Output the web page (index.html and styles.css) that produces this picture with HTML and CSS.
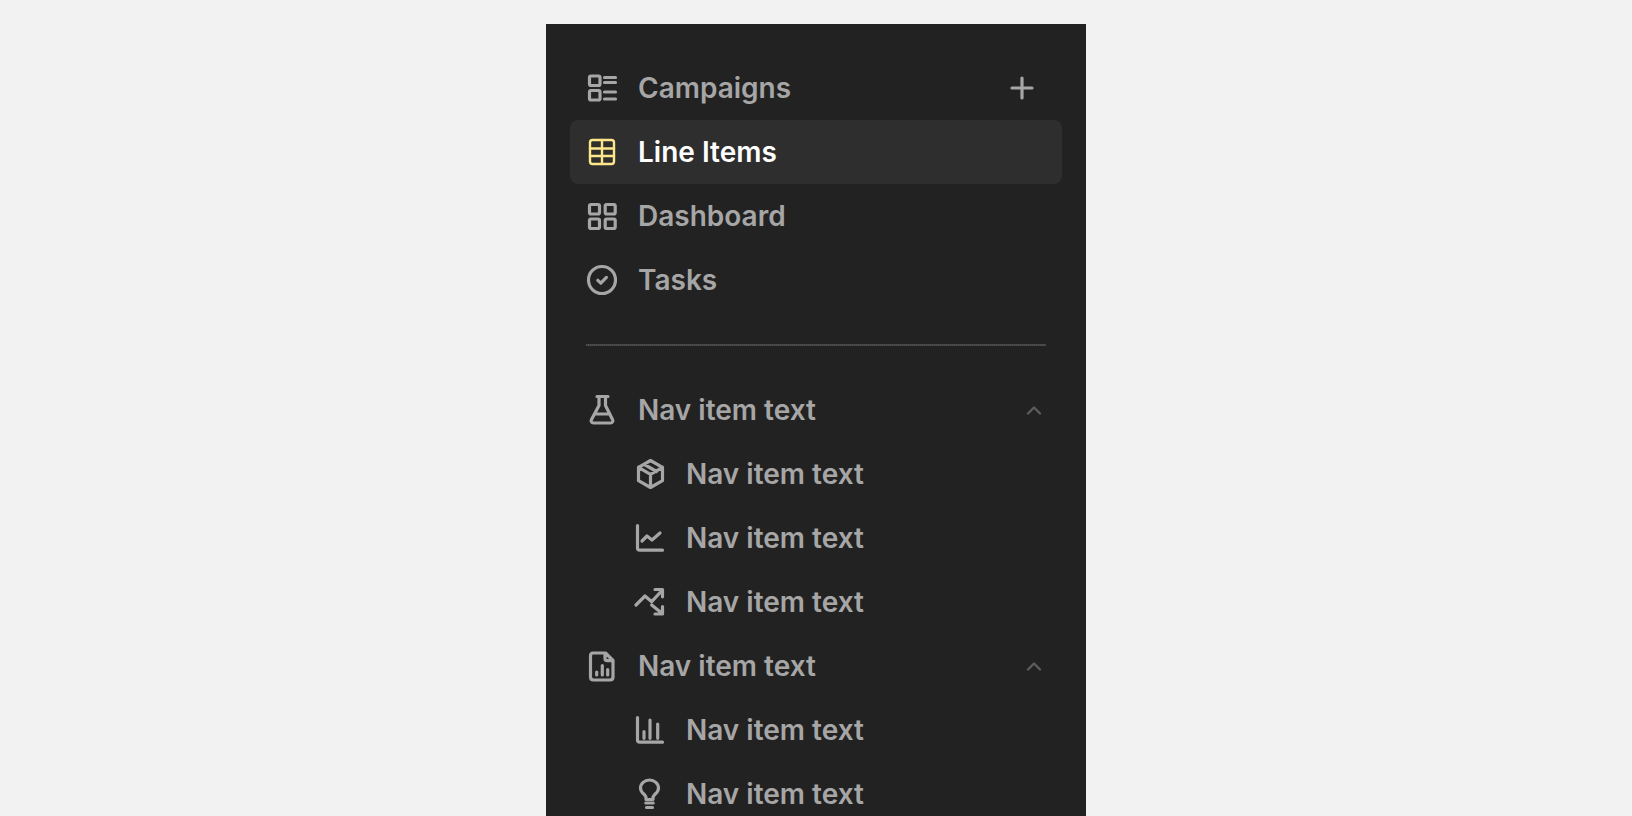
FILE: index.html
```html
<!DOCTYPE html>
<html lang="en">
<head>
<meta charset="utf-8">
<title>Navigation</title>
<link rel="stylesheet" href="styles.css">
</head>
<body>
<nav class="panel">
  <a class="row">
    <svg class="icon" viewBox="0 0 32 32"><rect x="3.500" y="4" width="10.500" height="9.500" rx="1.500"/><rect x="3.500" y="18.500" width="10.500" height="9.500" rx="1.500"/><path d="M18.500 5.500h11M18.500 10.500h11M18.500 20h11M18.500 27h11"/></svg>
    <span class="label">Campaigns</span>
    <svg class="icon end" viewBox="0 0 32 32"><path d="M16 6v20M6 16h20"/></svg>
  </a>
  <a class="row active">
    <svg class="icon" viewBox="0 0 32 32"><rect x="4" y="4" width="24" height="24" rx="2.500"/><path d="M16 4v24M4 12.500h24M4 20h24"/></svg>
    <span class="label">Line Items</span>
  </a>
  <a class="row">
    <svg class="icon" viewBox="0 0 32 32"><rect x="3.500" y="4.500" width="10" height="9.500" rx="1.500"/><rect x="19.200" y="4.500" width="10" height="9.500" rx="1.500"/><rect x="3.500" y="19" width="10" height="9.500" rx="1.500"/><rect x="19.200" y="19" width="10" height="9.500" rx="1.500"/></svg>
    <span class="label">Dashboard</span>
  </a>
  <a class="row">
    <svg class="icon" viewBox="0 0 32 32"><circle cx="16" cy="16" r="13.500"/><path d="M11.800 16.300l3 2.900 5.600-5.800"/></svg>
    <span class="label">Tasks</span>
  </a>
  <hr class="divider">
  <a class="row">
    <svg class="icon" viewBox="0 0 32 32"><path d="M11 2.500h11M13 2.500v9L5.500 25.500c-1 2 .2 3.500 2 3.500h17c1.800 0 3-1.500 2-3.500L19.500 11.500v-9M9.500 20h13"/></svg>
    <span class="label">Nav item text</span>
    <svg class="chevron end" viewBox="0 0 24 24"><path d="M6 15.500l6-6 6 6"/></svg>
  </a>
  <a class="row sub">
    <svg class="icon" viewBox="0 0 32 32"><path d="M16.500 2.500l12 6.800v13.400l-12 6.800-12-6.800V9.300zM4.500 9.300l12 7 12-7M16.500 16.300v13M10.500 6.500l12 7"/></svg>
    <span class="label">Nav item text</span>
  </a>
  <a class="row sub">
    <svg class="icon" viewBox="0 0 32 32"><path d="M3.500 3.500v22.500c0 1.500.8 2.200 2.200 2.200H28.500M8 19l5-5 5 4 8-7"/></svg>
    <span class="label">Nav item text</span>
  </a>
  <a class="row sub">
    <svg class="icon" viewBox="0 0 32 32"><path d="M2 19l9-9 6.700 5.700L28 4.500M21 3.500h7.500v7.300M17.700 19l10.500 8.500M21 28h7.500v-7.300"/></svg>
    <span class="label">Nav item text</span>
  </a>
  <a class="row">
    <svg class="icon" viewBox="0 0 32 32"><path d="M7 3h12.500L27 10.500V27c0 2-1 3-3 3H7.500c-2 0-3-1-3-3V6c0-2 1-3 2.500-3zM19 3.500V8.500c0 1.500.8 2.200 2.200 2.200h5.500M10.700 22v3M16.300 15.500v9.500M21.700 19.500v5.500"/></svg>
    <span class="label">Nav item text</span>
    <svg class="chevron end" viewBox="0 0 24 24"><path d="M6 15.500l6-6 6 6"/></svg>
  </a>
  <a class="row sub">
    <svg class="icon" viewBox="0 0 32 32"><path d="M3.500 3.500v22.500c0 1.500.8 2.200 2.200 2.200H28.500M10 17.500v6.800M16 6v18.300M23.700 10v14.300"/></svg>
    <span class="label">Nav item text</span>
  </a>
  <a class="row sub">
    <svg class="icon" viewBox="0 0 32 32"><path d="M12 21.500v-1.800c0-1.500-.8-2.200-2-3.500-2-1.800-3.500-3.500-3.500-6C6.500 5.500 10.500 2 15.500 2s9 3.500 9 8.200c0 2.500-1.500 4.200-3.500 6-1.200 1.300-2 2-2 3.500v1.800zM11.800 25h7.400M12.500 29.500h6"/></svg>
    <span class="label">Nav item text</span>
  </a>
</nav>
</body>
</html>
```
FILE: styles.css
```css
* { box-sizing: border-box; }
html, body { height: 100%; }
body {
  margin: 0;
  overflow: hidden;
  background: #f2f2f2;
  font-family: Inter, "Noto Sans", sans-serif;
}
.panel {
  width: 540px;
  margin: 24px auto 0;
  padding: 32px 24px;
  background: #222222;
  display: flex;
  flex-direction: column;
  color: #a6a6a6;
}
.row {
  display: flex;
  align-items: center;
  gap: 20px;
  height: 64px;
  flex: none;
  padding: 0 16px;
  border-radius: 8px;
  font-size: 28px;
  font-weight: 600;
  line-height: 40px;
}
.row.sub { padding-left: 64px; }
.row.active { background: #2e2e2e; color: #ffffff; }
.row.active .icon { stroke: #fde68a; stroke-width: 2.4; }
.label { flex: 1; white-space: nowrap; }
.icon {
  width: 32px;
  height: 32px;
  flex: none;
  fill: none;
  stroke: #a6a6a6;
  stroke-width: 3.2;
  stroke-linecap: round;
  stroke-linejoin: round;
}
.icon.end { margin-right: 8px; }
.chevron {
  width: 24px;
  height: 24px;
  flex: none;
  fill: none;
  stroke: #5c5c5c;
  stroke-width: 2.4;
  stroke-linecap: round;
  stroke-linejoin: round;
}
.divider {
  width: 460px;
  height: 2px;
  margin: 32px auto;
  border: 0;
  flex: none;
  background: repeating-linear-gradient(90deg, #4e4e4e 0 1px, #424242 1px 2px);
}
```
